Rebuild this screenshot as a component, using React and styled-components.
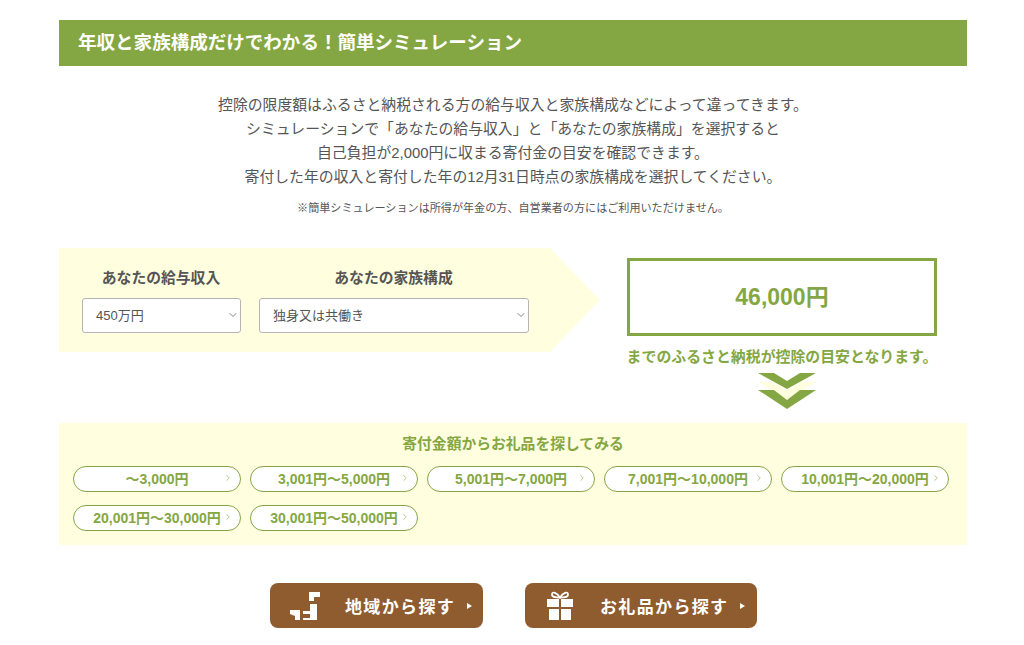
import React from "react";
import styled, { createGlobalStyle } from "styled-components";
import { ChevronDown, ChevronRight } from "lucide-react";

const GREEN = "#85a743";
const CREAM = "#ffffe0";
const BROWN = "#8f5c30";

const amounts = [
  "～3,000円",
  "3,001円～5,000円",
  "5,001円～7,000円",
  "7,001円～10,000円",
  "10,001円～20,000円",
  "20,001円～30,000円",
  "30,001円～50,000円",
];

function App() {
  return (
    <Page>
      <GlobalStyle />
      <Heading>年収と家族構成だけでわかる！簡単シミュレーション</Heading>
      <Intro>
        控除の限度額はふるさと納税される方の給与収入と家族構成などによって違ってきます。
        <br />
        シミュレーションで「あなたの給与収入」と「あなたの家族構成」を選択すると
        <br />
        自己負担が2,000円に収まる寄付金の目安を確認できます。
        <br />
        寄付した年の収入と寄付した年の12月31日時点の家族構成を選択してください。
      </Intro>
      <Note>※簡単シミュレーションは所得が年金の方、自営業者の方にはご利用いただけません。</Note>

      <Simulator>
        <InputArrow>
          <Field $width={159}>
            <FieldLabel>あなたの給与収入</FieldLabel>
            <SelectWrap>
              <Select defaultValue="450">
                <option value="450">450万円</option>
              </Select>
              <SelectIcon size={12} strokeWidth={1.5} />
            </SelectWrap>
          </Field>
          <Field $width={270}>
            <FieldLabel>あなたの家族構成</FieldLabel>
            <SelectWrap>
              <Select defaultValue="single">
                <option value="single">独身又は共働き</option>
              </Select>
              <SelectIcon size={12} strokeWidth={1.5} />
            </SelectWrap>
          </Field>
        </InputArrow>
        <Result>
          <ResultBox>46,000円</ResultBox>
          <ResultNote>までのふるさと納税が控除の目安となります。</ResultNote>
          <DownArrows width="58" height="37" viewBox="0 0 58 37">
            <path d="M0 9H14L29 17L44 9H58L29 27Z" fill={CREAM} />
            <path d="M0 0H16L29 8L42 0H58L29 16Z" fill={GREEN} />
            <path d="M0 17H16L29 27L42 17H58L29 36Z" fill={GREEN} />
          </DownArrows>
        </Result>
      </Simulator>

      <AmountPanel>
        <AmountTitle>寄付金額からお礼品を探してみる</AmountTitle>
        <AmountGrid>
          {amounts.map((label) => (
            <AmountPill key={label} href="#">
              {label}
              <PillIcon size={10} strokeWidth={1.5} />
            </AmountPill>
          ))}
        </AmountGrid>
      </AmountPanel>

      <Actions>
        <BrownButton href="#" $width={213}>
          <svg width="30" height="28" viewBox="0 0 30 28" fill="#fff">
            <path d="M19 0H30V5H24V9H19Z" />
            <path d="M20 12H27V28H13V26H20V22H13V19H20Z" />
            <path d="M0 18H10V28H5V24L0 22Z" />
          </svg>
          <ButtonText $left={25}>地域から探す</ButtonText>
          <ButtonCaret />
        </BrownButton>
        <BrownButton href="#" $width={232} $inset={22}>
          <svg width="26" height="29" viewBox="0 0 26 29" fill="#fff">
            <path
              d="M13 6.5C10 1.5 5 0 5 3.5C5 6.5 9 6.5 13 6.5C17 6.5 21 6.5 21 3.5C21 0 16 1.5 13 6.5Z"
              fill="none"
              stroke="#fff"
              strokeWidth="1.8"
            />
            <path d="M0 8H12V16H0ZM14 8H26V16H14Z" />
            <path d="M2 18H12V29H2ZM14 18H24V29H14Z" />
          </svg>
          <ButtonText $left={27}>お礼品から探す</ButtonText>
          <ButtonCaret />
        </BrownButton>
      </Actions>
    </Page>
  );
}

const GlobalStyle = createGlobalStyle`
  html, body {
    margin: 0;
    background: #fff;
  }
  body {
    font-family: "Liberation Sans", "Noto Sans CJK JP", sans-serif;
    color: #555;
  }
  * {
    box-sizing: border-box;
  }
`;

const Page = styled.div`
  width: 908px;
  margin: 0 0 0 59px;
  padding-top: 20px;
`;

const Heading = styled.h2`
  margin: 0;
  height: 46px;
  padding-left: 19px;
  background: ${GREEN};
  color: #fff;
  font-size: 18.55px;
  font-weight: 700;
  line-height: 46px;
`;

const Intro = styled.p`
  margin: 27px 0 0;
  text-align: center;
  font-size: 14.85px;
  line-height: 24px;
`;

const Note = styled.p`
  margin: 11px 0 0;
  text-align: center;
  font-size: 11.1px;
  line-height: 16px;
`;

const Simulator = styled.div`
  display: flex;
  margin-top: 32px;
`;

const InputArrow = styled.div`
  display: flex;
  gap: 18px;
  width: 541px;
  height: 104px;
  padding: 21px 0 0 23px;
  background: ${CREAM};
  clip-path: polygon(0 0, 491px 0, 100% 50%, 491px 100%, 0 100%);
`;

const Field = styled.div`
  width: ${(props) => props.$width}px;
`;

const FieldLabel = styled.div`
  height: 29px;
  padding-right: 1px;
  text-align: center;
  font-size: 14.8px;
  font-weight: 700;
  line-height: 18px;
`;

const SelectWrap = styled.div`
  position: relative;
`;

const Select = styled.select`
  display: block;
  width: 100%;
  height: 35px;
  padding: 0 0 0 13px;
  appearance: none;
  border: 1px solid #b5b5b5;
  border-radius: 3px;
  background: #fff;
  color: #555;
  font-family: inherit;
  font-size: 13px;
`;

const SelectIcon = styled(ChevronDown)`
  position: absolute;
  top: 11px;
  right: 2px;
  color: #555;
  pointer-events: none;
`;

const Result = styled.div`
  display: flex;
  flex-direction: column;
  align-items: center;
  width: 310px;
  margin: 10px 0 0 27px;
`;

const ResultBox = styled.div`
  width: 100%;
  height: 78px;
  border: 3px solid ${GREEN};
  color: ${GREEN};
  text-align: center;
  font-size: 23px;
  font-weight: 700;
  line-height: 72px;
`;

const ResultNote = styled.div`
  margin-top: 12px;
  color: ${GREEN};
  white-space: nowrap;
  font-size: 14.9px;
  font-weight: 700;
  line-height: 18px;
`;

const DownArrows = styled.svg`
  display: block;
  margin: 7px 0 0 10px;
`;

const AmountPanel = styled.section`
  height: 122px;
  margin-top: 13px;
  padding: 12px 14px 0;
  background: ${CREAM};
`;

const AmountTitle = styled.h3`
  margin: 0;
  color: ${GREEN};
  text-align: center;
  font-size: 14.8px;
  font-weight: 700;
  line-height: 18px;
`;

const AmountGrid = styled.div`
  display: flex;
  flex-wrap: wrap;
  gap: 13px 9px;
  width: 880px;
  margin-top: 13px;
`;

const AmountPill = styled.a`
  position: relative;
  display: block;
  width: 168px;
  height: 26px;
  border: 1px solid ${GREEN};
  border-radius: 13px;
  background: #fff;
  color: ${GREEN};
  text-align: center;
  text-decoration: none;
  font-size: 14px;
  font-weight: 700;
  line-height: 25px;
`;

const PillIcon = styled(ChevronRight)`
  position: absolute;
  top: 6px;
  right: 7px;
`;

const Actions = styled.div`
  display: flex;
  justify-content: center;
  gap: 42px;
  margin-top: 38px;
  padding-left: 1px;
`;

const BrownButton = styled.a`
  display: flex;
  align-items: center;
  width: ${(props) => props.$width}px;
  height: 45px;
  padding-left: ${(props) => props.$inset || 20}px;
  border-radius: 8px;
  background: ${BROWN};
  color: #fff;
  text-decoration: none;
`;

const ButtonText = styled.span`
  margin-left: ${(props) => props.$left}px;
  font-size: 17px;
  font-weight: 700;
  letter-spacing: 1.35px;
`;

const ButtonCaret = styled.span`
  width: 0;
  height: 0;
  margin-left: 12px;
  border-left: 5px solid #fff;
  border-top: 3px solid transparent;
  border-bottom: 3px solid transparent;
`;

export default App;
